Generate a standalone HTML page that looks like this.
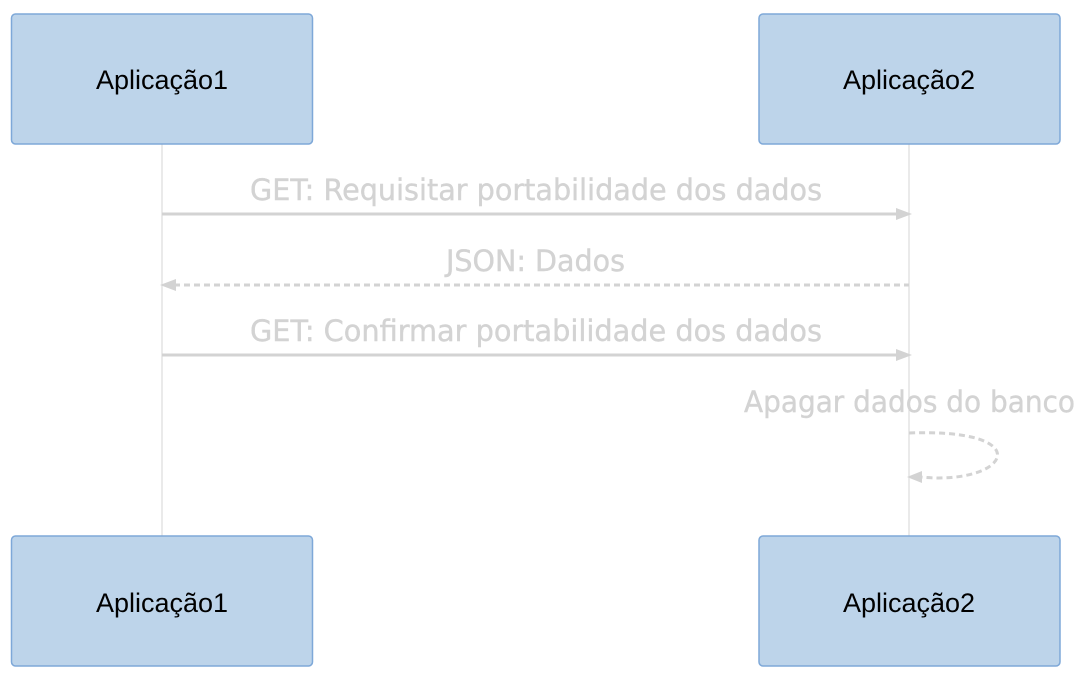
<!DOCTYPE html>
<html><head><meta charset="utf-8"><style>
html,body{margin:0;padding:0;background:#fff;width:1086px;height:680px;overflow:hidden}
</style></head><body>
<svg width="1086" height="680" viewBox="0 0 1086 680" xmlns="http://www.w3.org/2000/svg">
<line x1="162" y1="144" x2="162" y2="536" stroke="#d6d6d6" stroke-width="1"/>
<line x1="909" y1="144" x2="909" y2="536" stroke="#d6d6d6" stroke-width="1"/>
<g fill="#bdd4ea" stroke="#7ea8d8" stroke-width="1.5">
<rect x="11.5" y="14" width="301" height="130" rx="4"/>
<rect x="759" y="14" width="301" height="130" rx="4"/>
<rect x="11.5" y="536" width="301" height="130" rx="4"/>
<rect x="759" y="536" width="301" height="130" rx="4"/>
</g>
<g font-family="Liberation Sans, Arial, sans-serif" font-size="27" fill="#000" text-anchor="middle">
<text x="162" y="89">Aplicação1</text>
<text x="909" y="89">Aplicação2</text>
<text x="162" y="612">Aplicação1</text>
<text x="909" y="612">Aplicação2</text>
</g>
<g font-family="DejaVu Sans, sans-serif" font-size="29" fill="#d3d3d3" stroke="#d3d3d3" stroke-width="0.4">
<text x="250" y="200" textLength="572" lengthAdjust="spacingAndGlyphs">GET: Requisitar portabilidade dos dados</text>
<text x="446" y="271" textLength="179" lengthAdjust="spacingAndGlyphs">JSON: Dados</text>
<text x="250" y="341" textLength="572" lengthAdjust="spacingAndGlyphs">GET: Confirmar portabilidade dos dados</text>
<text x="744" y="412" textLength="331" lengthAdjust="spacingAndGlyphs">Apagar dados do banco</text>
</g>
<g stroke="#d3d3d3" stroke-width="3" fill="none">
<line x1="162" y1="214" x2="898" y2="214"/>
<line x1="174" y1="285" x2="909" y2="285" stroke-dasharray="6,4"/>
<line x1="162" y1="355" x2="898" y2="355"/>
<path d="M909 433 C1040 428 1010 486 920 477" stroke-dasharray="6,4"/>
</g>
<g fill="#d3d3d3">
<polygon points="912,214 896,208 896,220"/>
<polygon points="160,285 176,279 176,291"/>
<polygon points="912,355 896,349 896,361"/>
<polygon points="907,477 922,471 922,483"/>
</g>
</svg>
</body></html>
